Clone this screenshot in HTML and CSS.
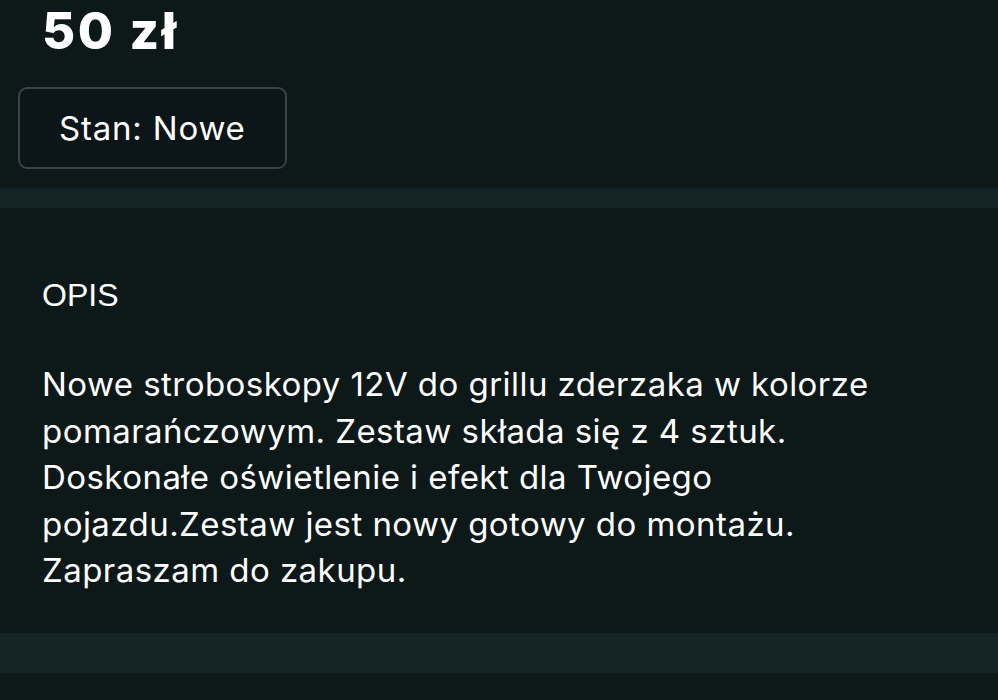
FILE: index.html
```html
<!DOCTYPE html>
<html lang="pl">
<head>
<meta charset="utf-8">
<title>Ogłoszenie</title>
<link rel="stylesheet" href="styles.css">
</head>
<body>
<section class="top">
  <h2 class="price">50 zł</h2>
  <div class="badge">Stan: Nowe</div>
</section>
<div class="band band-small"></div>
<section class="desc">
  <h3 class="desc-title">OPIS</h3>
  <p class="desc-text">Nowe stroboskopy 12V do grillu zderzaka w kolorze pomarańczowym. Zestaw składa się z 4 sztuk. Doskonałe oświetlenie i efekt dla Twojego pojazdu.Zestaw jest nowy gotowy do montażu. Zapraszam do zakupu.</p>
</section>
<div class="band band-large"></div>
<div class="rest"></div>
</body>
</html>
```
FILE: styles.css
```css
html, body {
  margin: 0;
  padding: 0;
  background: #0d1819;
  color: #ffffff;
  font-family: Inter, "Noto Sans", sans-serif;
}
.top {
  padding: 0 0 19px 18px;
}
.price {
  margin: 0 0 25px 24px;
  font-size: 51px;
  line-height: 62px;
  font-weight: 800;
  letter-spacing: 2.6px;
}
.badge {
  box-sizing: border-box;
  width: 269px;
  height: 82px;
  border: 2px solid #3a4243;
  border-radius: 9px;
  background: #0c1517;
  display: flex;
  align-items: center;
  padding-left: 39px;
  font-size: 33px;
  font-weight: 400;
  letter-spacing: 0.8px;
}
.band {
  background: #152426;
}
.band-small {
  height: 20px;
}
.band-large {
  height: 40px;
}
.desc {
  padding: 67px 20px 0 42px;
  height: 425px;
  box-sizing: border-box;
}
.desc-title {
  margin: 0 0 46px 0;
  font-family: "Liberation Sans", Arial, sans-serif;
  font-size: 32px;
  line-height: 40px;
  font-weight: 400;
}
.desc-text {
  margin: 0;
  font-size: 33px;
  line-height: 46.5px;
  letter-spacing: 0.45px;
  width: 900px;
}
.rest {
  height: 60px;
}
```
